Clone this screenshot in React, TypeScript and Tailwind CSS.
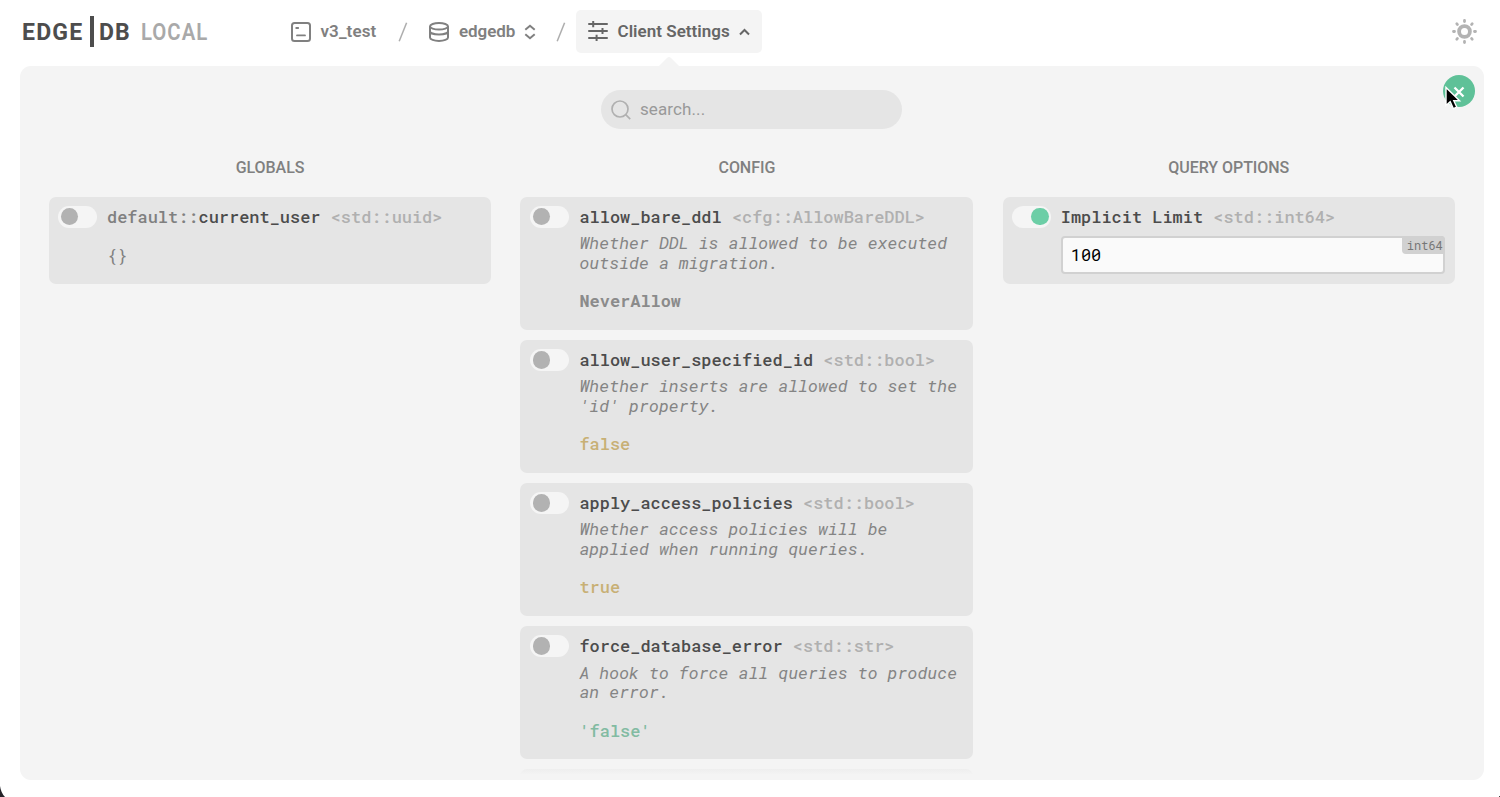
import React from "react";

const mono = "font-['Roboto_Mono','DejaVu_Sans_Mono',monospace]";

function Toggle({ on = false }: { on?: boolean }) {
  return (
    <div
      className={
        on
          ? "mt-[9px] flex h-[22px] w-[39px] shrink-0 items-center justify-end rounded-full bg-[#f5f5f5] px-[2px]"
          : "mt-[9px] flex h-[22px] w-[39px] shrink-0 items-center rounded-full bg-[#f5f5f5] px-[2.5px]"
      }
    >
      <div className={on ? "size-[17.5px] rounded-full bg-[#6ccea6]" : "size-[17.5px] rounded-full bg-[#b2b2b2]"} />
    </div>
  );
}

type CardProps = {
  module?: string;
  name: string;
  type: string;
  lines?: string[];
  on?: boolean;
  children?: React.ReactNode;
};

function Card({ module, name, type, lines, on, children }: CardProps) {
  return (
    <div
      className={
        lines
          ? "flex h-[133px] shrink-0 rounded-[7px] bg-[#e5e5e5] pl-[10px]"
          : "flex h-[87px] shrink-0 rounded-[7px] bg-[#e5e5e5] pl-[9px]"
      }
    >
      <Toggle on={on} />
      <div className={`${mono} ml-[10px] flex-1 text-[16.95px] whitespace-pre`}>
        <div className="pt-[10px] leading-5 font-medium">
          <span className="text-[#808080]">{module}</span>
          <span className="text-[#4c4c4c]">{name}</span>
          <span className="text-[#b0b0b0]"> {type}</span>
        </div>
        {lines && (
          <div className="mt-[6.5px] leading-[19.5px] text-[#848484] italic">
            {lines.map((l) => (
              <div key={l}>{l}</div>
            ))}
          </div>
        )}
        {children}
      </div>
    </div>
  );
}

function Heading({ children }: { children: string }) {
  return <h2 className="h-[38.6px] text-center text-base leading-5 font-medium tracking-[-0.05px] text-[#808080]">{children}</h2>;
}

function Value({ children, className }: { children: string; className: string }) {
  return <div className={`mt-[19px] leading-5 ${className}`}>{children}</div>;
}

const config = [
  {
    name: "allow_bare_ddl",
    type: "<cfg::AllowBareDDL>",
    lines: ["Whether DDL is allowed to be executed", "outside a migration."],
    value: "NeverAllow",
    color: "text-[#8b8b8b] font-bold",
  },
  {
    name: "allow_user_specified_id",
    type: "<std::bool>",
    lines: ["Whether inserts are allowed to set the", "'id' property."],
    value: "false",
    color: "text-[#c8b075] font-medium",
  },
  {
    name: "apply_access_policies",
    type: "<std::bool>",
    lines: ["Whether access policies will be", "applied when running queries."],
    value: "true",
    color: "text-[#c8b075] font-medium",
  },
  {
    name: "force_database_error",
    type: "<std::str>",
    lines: ["A hook to force all queries to produce", "an error."],
    value: "'false'",
    color: "text-[#82bba2] font-medium",
  },
];

function Slash() {
  return (
    <svg className="h-[20px] w-[10px]" viewBox="0 0 10 20" stroke="#adadad" strokeWidth="1.5">
      <path d="M8.6 .7 1.2 19.3" />
    </svg>
  );
}

function Header() {
  return (
    <header className="flex h-[66px] items-start text-[#808080]">
      <div className="flex w-[291px] pt-[16px] pl-[22px]">
        <div className="flex w-[119px] items-start">
          <span className="w-[68px] origin-left scale-x-[0.94] pt-[4px] text-[24.5px] leading-6 font-bold tracking-[1.3px] text-[#4d4d4d]">EDGE</span>
          <span className="h-[31px] w-[4px] bg-[#4d4d4d]" />
          <span className="ml-[5px] origin-left scale-x-[0.94] pt-[4px] text-[24.5px] leading-6 font-bold tracking-[1px] text-[#4d4d4d]">DB</span>
        </div>
        <span className="origin-left scale-x-[0.83] pt-[4px] text-[24.5px] leading-6 font-semibold tracking-[1.2px] text-[#a9a9a9]">LOCAL</span>
      </div>
      <div className="flex w-[108px] items-center pt-[22px]">
        <svg className="size-5 shrink-0" viewBox="0 0 20 20" fill="none" stroke="#808080" strokeWidth="2">
          <rect x="1" y="1" width="18" height="18" rx="2.5" />
          <path d="M5.2 6h2M6 13.4h8" strokeWidth="1.8" strokeLinecap="round" />
        </svg>
        <span className="-mt-[2px] ml-[9.5px] text-[17px] leading-5 font-semibold tracking-[0.1px]">v3_test</span>
      </div>
      <div className="flex w-[177px] items-center pt-[22px]">
        <div className="-ml-[1px] flex"><Slash /></div>
        <svg className="ml-[21px] h-5 w-5 shrink-0" viewBox="0 0 20 20" fill="none" stroke="#808080" strokeWidth="2">
          <ellipse cx="10" cy="4.3" rx="9" ry="3.3" />
          <path d="M1 4.3v11.2c0 1.9 4 3.4 9 3.4s9-1.5 9-3.4V4.3M1 9.2c0 1.9 4 3.3 9 3.3s9-1.4 9-3.3" />
        </svg>
        <span className="-mt-[2px] ml-[10px] text-[17px] leading-5 font-semibold tracking-[-0.05px]">edgedb</span>
        <svg className="ml-[9px] h-[16px] w-[12px]" viewBox="0 0 12 16" fill="none" stroke="#808080" strokeWidth="2">
          <path d="m1.3 5.8 4.7-4 4.7 4M1.3 10.2l4.7 4 4.7-4" />
        </svg>
        <div className="ml-[20px] flex"><Slash /></div>
      </div>
      <div className="relative mt-[10px] flex h-[43px] w-[186px] items-center rounded-[5px] bg-[#f4f4f4] pl-[12px] text-[#666]">
        <svg className="-mt-[2px] h-5 w-5 shrink-0" viewBox="0 0 20 20" fill="none" stroke="#666" strokeWidth="2">
          <path d="M1 3.1h18M1 10h18M1 16.9h18" strokeLinecap="round" strokeWidth="2" />
          <path d="M5.2 0v6.2M14.5 6.9v6.2M8.6 13.8v6.2" />
        </svg>
        <span className="-mt-[1px] ml-[9.5px] text-[17px] leading-5 font-semibold tracking-[0.03px] whitespace-nowrap">Client Settings</span>
        <svg className="ml-[9px] h-[8px] w-[11px]" viewBox="0 0 11 8" fill="none" stroke="#666" strokeWidth="2">
          <path d="m1 6.5 4.5-4.5L10 6.5" />
        </svg>
        <svg className="absolute top-[46px] left-[83px] h-[10px] w-[20px]" viewBox="0 0 20 10" fill="#f4f4f4">
          <path d="M0 10 8 2.1Q10 0 12 2.1L20 10Z" />
        </svg>
      </div>
      <svg className="mt-[19px] mr-[23px] ml-auto h-[25px] w-[25px]" viewBox="0 0 25 25" fill="none" stroke="#b3b3b3">
        <circle cx="12.5" cy="12.5" r="5.4" strokeWidth="3.8" />
        <path d="M12.5 1.5v1M12.5 22.5v1M1.5 12.5h1M22.5 12.5h1M4.8 4.8l.6.6M19.6 19.6l.6.6M4.8 20.2l.6-.6M19.6 5.4l.6-.6" strokeWidth="2.8" strokeLinecap="round" />
      </svg>
    </header>
  );
}

export default function App() {
  return (
    <div className="relative flex h-[797px] w-[1500px] flex-col overflow-hidden bg-white font-[Roboto,sans-serif]">
      <Header />
      <main className="relative ml-5 flex h-[714px] w-[1464px] flex-col overflow-hidden rounded-[11px] bg-[#f4f4f4]">
        <div className="mt-6 ml-[581px] flex h-[39px] w-[301px] shrink-0 items-center rounded-full bg-[#e5e5e5] pl-[10px]">
          <svg className="h-5 w-5" viewBox="0 0 20 20" fill="none" stroke="#b0b0b0" strokeWidth="1.7">
            <circle cx="9" cy="9" r="8" />
            <path d="m14.7 14.7 4.5 4.5" />
          </svg>
          <span className="-mt-[2px] ml-[9px] text-[17px] leading-5 tracking-[0.1px] text-[#999]">search...</span>
        </div>
        <div className="mt-[29px] ml-[29px] grid h-[616px] shrink-0 grid-cols-[442px_453px_452px] gap-x-[29.4px] overflow-hidden">
          <section>
            <Heading>GLOBALS</Heading>
            <Card module="default::" name="current_user" type="<std::uuid>">
              <div className="mt-[19px] leading-5 text-[#808080]">{"{}"}</div>
            </Card>
          </section>
          <section>
            <Heading>CONFIG</Heading>
            <div className="flex flex-col gap-[10.2px]">
              {config.map((c) => (
                <Card key={c.name} name={c.name} type={c.type} lines={c.lines}>
                  <Value className={c.color}>{c.value}</Value>
                </Card>
              ))}
              <div className="h-[10px] rounded-t-[7px] bg-linear-to-b from-[#eeeeee] to-[#f4f4f4] to-60%" />
            </div>
          </section>
          <section>
            <Heading>QUERY OPTIONS</Heading>
            <Card name="Implicit Limit" type="<std::int64>" on>
              <div className="relative mt-[9px] flex h-[38px] w-[384px] items-center rounded-[4px] border-2 border-[#d1d1d1] bg-[#fafafa] pl-[8px] text-black">
                <span>100</span>
                <span className="absolute -top-[2px] -right-[2px] h-[18px] w-[43px] rounded-tr-[4px] rounded-bl-[4px] bg-[#d1d1d1] pl-[5px] text-[12px] leading-[19px] text-[#777]">
                  int64
                </span>
              </div>
            </Card>
          </section>
        </div>
        <div className="absolute top-[9px] left-[1423px] flex size-8 items-center justify-center rounded-full bg-[#5fc198]">
          <svg className="mt-[2px] h-[12px] w-[12px]" viewBox="0 0 12 12" stroke="#fff" strokeWidth="2.3">
            <path d="m1.5 1.5 9 9m0-9-9 9" />
          </svg>
        </div>
        <svg className="absolute top-[19px] left-[1424px] h-[28px] w-[18px]" viewBox="0 0 18 28">
          <path d="M2 2.5v18l4.2-3.8 3.2 7 3.4-1.5-3-6.5h5.8Z" fill="#000" stroke="#fff" strokeWidth="1.4" />
        </svg>
      </main>
      <svg className="absolute bottom-0 left-0 h-[12px] w-[6px]" viewBox="0 0 6 12">
        <path d="M0 1Q1 8 5 12H0Z" fill="#252329" />
      </svg>
      <div className="absolute right-0 bottom-0 size-px bg-[#444]" />
    </div>
  );
}
